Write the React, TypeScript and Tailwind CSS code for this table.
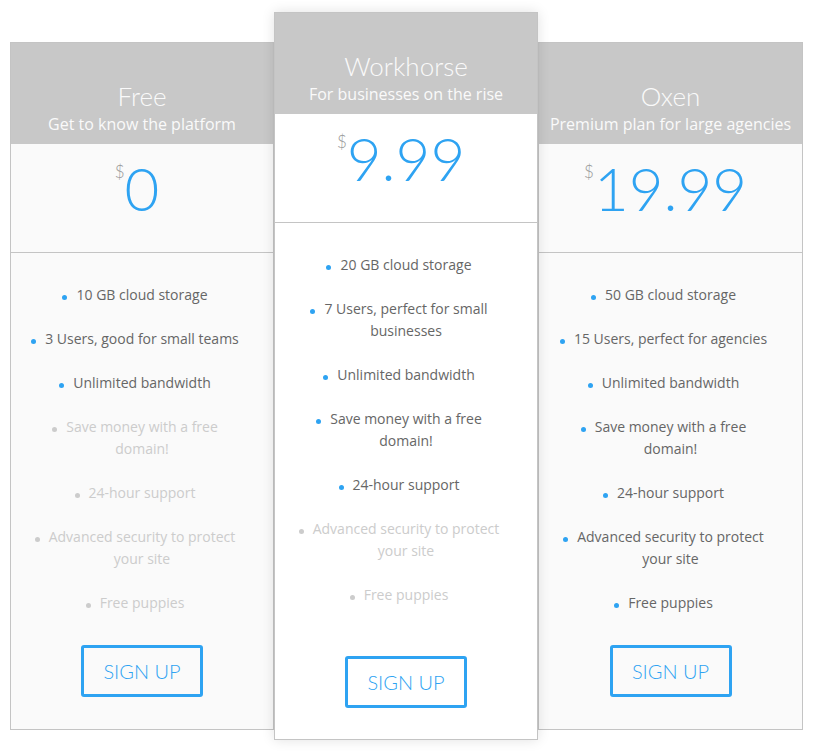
import React from "react";

type Feature = { text: string; on: boolean };
type Plan = {
  name: string;
  sub: string;
  price: string;
  features: Feature[];
  featured?: boolean;
};

const plans: Plan[] = [
  {
    name: "Free",
    sub: "Get to know the platform",
    price: "0",
    features: [
      { text: "10 GB cloud storage", on: true },
      { text: "3 Users, good for small teams", on: true },
      { text: "Unlimited bandwidth", on: true },
      { text: "Save money with a free domain!", on: false },
      { text: "24-hour support", on: false },
      { text: "Advanced security to protect your site", on: false },
      { text: "Free puppies", on: false },
    ],
  },
  {
    name: "Workhorse",
    sub: "For businesses on the rise",
    price: "9.99",
    featured: true,
    features: [
      { text: "20 GB cloud storage", on: true },
      { text: "7 Users, perfect for small businesses", on: true },
      { text: "Unlimited bandwidth", on: true },
      { text: "Save money with a free domain!", on: true },
      { text: "24-hour support", on: true },
      { text: "Advanced security to protect your site", on: false },
      { text: "Free puppies", on: false },
    ],
  },
  {
    name: "Oxen",
    sub: "Premium plan for large agencies",
    price: "19.99",
    features: [
      { text: "50 GB cloud storage", on: true },
      { text: "15 Users, perfect for agencies", on: true },
      { text: "Unlimited bandwidth", on: true },
      { text: "Save money with a free domain!", on: true },
      { text: "24-hour support", on: true },
      { text: "Advanced security to protect your site", on: true },
      { text: "Free puppies", on: true },
    ],
  },
];

function Card({ plan, width }: { plan: Plan; width: string }) {
  const featured = !!plan.featured;
  return (
    <div
      className={
        (featured
          ? "relative z-10 bg-white shadow-[0_0_12px_rgba(0,0,0,0.12)] "
          : "mt-[30px] bg-[#fafafa] ") +
        "border border-[#c4c4c4] flex flex-col " +
        width
      }
    >
      <div className="h-[101px] bg-[#c8c8c8] flex flex-col justify-end items-center pb-[8px] text-center">
        <div className="font-['Lato'] font-light text-[26px] leading-[28px] mb-[2px] text-[#fafafa]">
          {plan.name}
        </div>
        <div className="font-['Open_Sans'] text-[16px] leading-[24px] text-[#fafafa]">
          {plan.sub}
        </div>
      </div>
      <div className="h-[109px] border-b border-[#c4c4c4] flex justify-center pt-[14px]">
        <div className="relative font-['Lato'] font-light text-[60px] leading-[60px] text-[#2ea3f2]">
          <span className="absolute right-full top-[5px] font-['Lato'] font-light text-[17px] leading-[17px] text-[#999]">
            $
          </span>
          {plan.price}
        </div>
      </div>
      <ul className="pt-[20px] px-[32px] text-center font-['Open_Sans'] text-[14px] leading-[22px]">
        {plan.features.map((f, i) => (
          <li
            key={i}
            className={"py-[11px] " + (f.on ? "text-[#666]" : "text-[#cccccc]")}
          >
            <span
              className={
                "inline-block w-[5px] h-[5px] rounded-full ml-[-14px] mr-[9px] align-middle relative top-[1px] " +
                (f.on ? "bg-[#2ea3f2]" : "bg-[#cccccc]")
              }
            />
            {f.text}
          </li>
        ))}
      </ul>
      <div
        className={
          "flex justify-center " +
          (featured ? "pt-[39px] pb-[31px]" : "pt-[20px] pb-[32px]")
        }
      >
        <div className="w-[122px] h-[52px] border-[3px] border-[#2ea3f2] rounded-[3px] flex items-center justify-center font-['Lato'] font-light text-[20px] text-[#2ea3f2]">
          SIGN UP
        </div>
      </div>
    </div>
  );
}

export default function App() {
  return (
    <div className="w-[817px] h-[752px] bg-white overflow-hidden">
      <div className="flex items-start pl-[10px] pt-[12px]">
        <Card plan={plans[0]} width="w-[264px]" />
        <Card plan={plans[1]} width="w-[264px]" />
        <Card plan={plans[2]} width="w-[265px]" />
      </div>
    </div>
  );
}
